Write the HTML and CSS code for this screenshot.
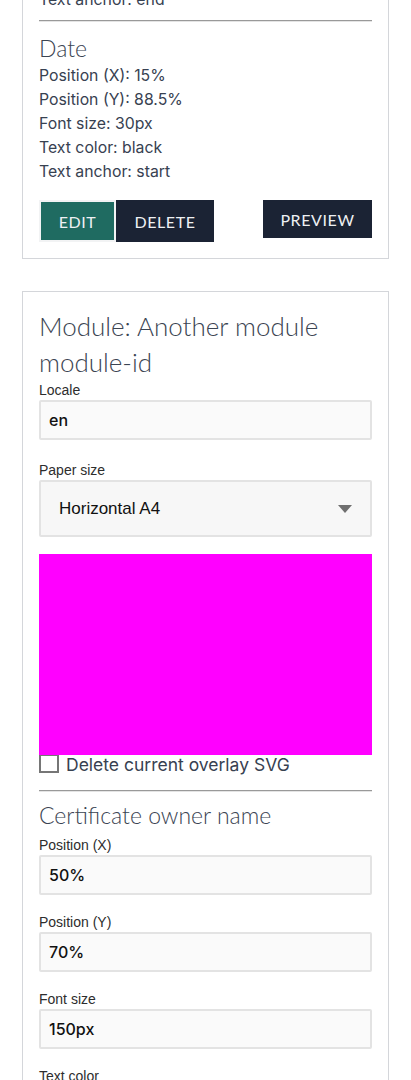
FILE: index.html
```html
<!DOCTYPE html>
<html lang="en">
<head>
<meta charset="utf-8">
<title>Modules</title>
<link rel="stylesheet" href="styles.css">
</head>
<body>
<div class="page">
  <section class="card card-first">
    <p class="prop">Text anchor: end</p>
    <hr class="rule">
    <h3 class="field-title">Date</h3>
    <p class="prop">Position (X): 15%</p>
    <p class="prop">Position (Y): 88.5%</p>
    <p class="prop">Font size: 30px</p>
    <p class="prop">Text color: black</p>
    <p class="prop">Text anchor: start</p>
    <div class="actions">
      <div class="actions-left">
        <button class="btn btn-edit">EDIT</button>
        <button class="btn btn-dark btn-delete">DELETE</button>
      </div>
      <button class="btn btn-dark btn-preview">PREVIEW</button>
    </div>
  </section>

  <section class="card">
    <h2 class="module-title">Module: Another module<br>module-id</h2>
    <label class="label label-first">Locale</label>
    <div class="input">en</div>
    <label class="label label-paper">Paper size</label>
    <div class="select">
      <span>Horizontal A4</span>
      <svg class="caret" width="14" height="8" viewBox="0 0 14 8"><path d="M0 0h14L7 8z" fill="#6f6f6f"/></svg>
    </div>
    <div class="overlay"></div>
    <label class="check">
      <span class="box"></span>
      <span>Delete current overlay SVG</span>
    </label>
    <hr class="rule rule-2">
    <h3 class="field-title field-title-2">Certificate owner name</h3>
    <label class="label label-after-title">Position (X)</label>
    <div class="input">50%</div>
    <label class="label label-gap">Position (Y)</label>
    <div class="input">70%</div>
    <label class="label label-gap">Font size</label>
    <div class="input">150px</div>
    <label class="label label-gap">Text color</label>
    <div class="input">black</div>
  </section>
</div>
</body>
</html>
```
FILE: styles.css
```css
* { box-sizing: border-box; }
html, body { margin: 0; padding: 0; background: #fff; }
body { font-family: Inter, "Liberation Sans", sans-serif; color: #374151; }

.page {
  display: flex;
  flex-direction: column;
  gap: 32px;
  padding: 0 22px;
  margin-top: -12px;
}

.card {
  border: 1px solid #d4d6da;
  padding: 16px 16px 16px;
  display: flex;
  flex-direction: column;
}
.card-first { border-top: none; padding-top: 0; }

.prop {
  margin: 0;
  font-size: 15.8px;
  line-height: 24px;
  color: #374151;
}

.rule {
  width: 100%;
  margin: 8px 0 0;
  border: 0;
  border-top: 1px solid #999;
  border-bottom: 1px solid #e4e4e4;
  height: 0;
}

.field-title {
  margin: 10px 0 0;
  font-family: Lato, sans-serif;
  font-weight: 300;
  font-size: 23px;
  line-height: 32px;
  color: #3b4452;
}

.actions {
  margin-top: 16px;
  display: flex;
  justify-content: space-between;
  align-items: flex-start;
}
.actions-left { display: flex; }

.btn {
  font-family: Lato, sans-serif;
  font-size: 16px;
  font-weight: 400;
  letter-spacing: 0.6px;
  color: #eef0f3;
  border: 0;
  padding: 0;
  cursor: pointer;
}
.btn-edit {
  background: #1f6b61;
  border: 2px solid #f2f3f4;
  width: 77px;
  height: 42px;
}
.btn-dark { background: #1b2334; }
.btn-delete { width: 98px; height: 42px; }
.btn-preview { width: 109px; height: 38px; }

.module-title {
  margin: 0;
  font-family: Lato, sans-serif;
  font-weight: 300;
  font-size: 26px;
  line-height: 36px;
  color: #3b4452;
}

.label {
  display: block;
  margin-top: 0;
  font-family: "Liberation Sans", Arial, sans-serif;
  font-size: 14px;
  line-height: 18px;
  color: #2d2d2d;
}
.label-first { margin-top: 1px; }
.label-paper { margin-top: 21px; }
.label-after-title { margin-top: 5px; }
.label-gap { margin-top: 18px; }

.input {
  margin-top: 1px;
  height: 40px;
  border: 2px solid #e3e3e3;
  border-radius: 2px;
  background: #fafafa;
  padding: 0 8px;
  display: flex;
  align-items: center;
  font-family: Inter, sans-serif;
  font-weight: 500;
  font-size: 16px;
  color: #111;
}

.select {
  margin-top: 1px;
  height: 57px;
  border: 2px solid #e3e3e3;
  border-radius: 2px;
  background: #f7f7f7;
  padding: 0 18px 0 18px;
  display: flex;
  align-items: center;
  justify-content: space-between;
  font-family: "Liberation Sans", Arial, sans-serif;
  font-size: 17px;
  color: #111;
}

.overlay {
  margin-top: 17px;
  height: 201px;
  background: #ff00ff;
}

.check {
  display: flex;
  align-items: flex-start;
  gap: 7px;
  font-size: 17.5px;
  line-height: 20px;
  color: #374151;
}
.box {
  width: 20px;
  height: 18px;
  border: 2px solid #767676;
  border-top-width: 1px;
  background: #fff;
  flex: none;
}

.rule-2 { margin-top: 15px; }
.field-title-2 { margin-top: 7px; }
```
